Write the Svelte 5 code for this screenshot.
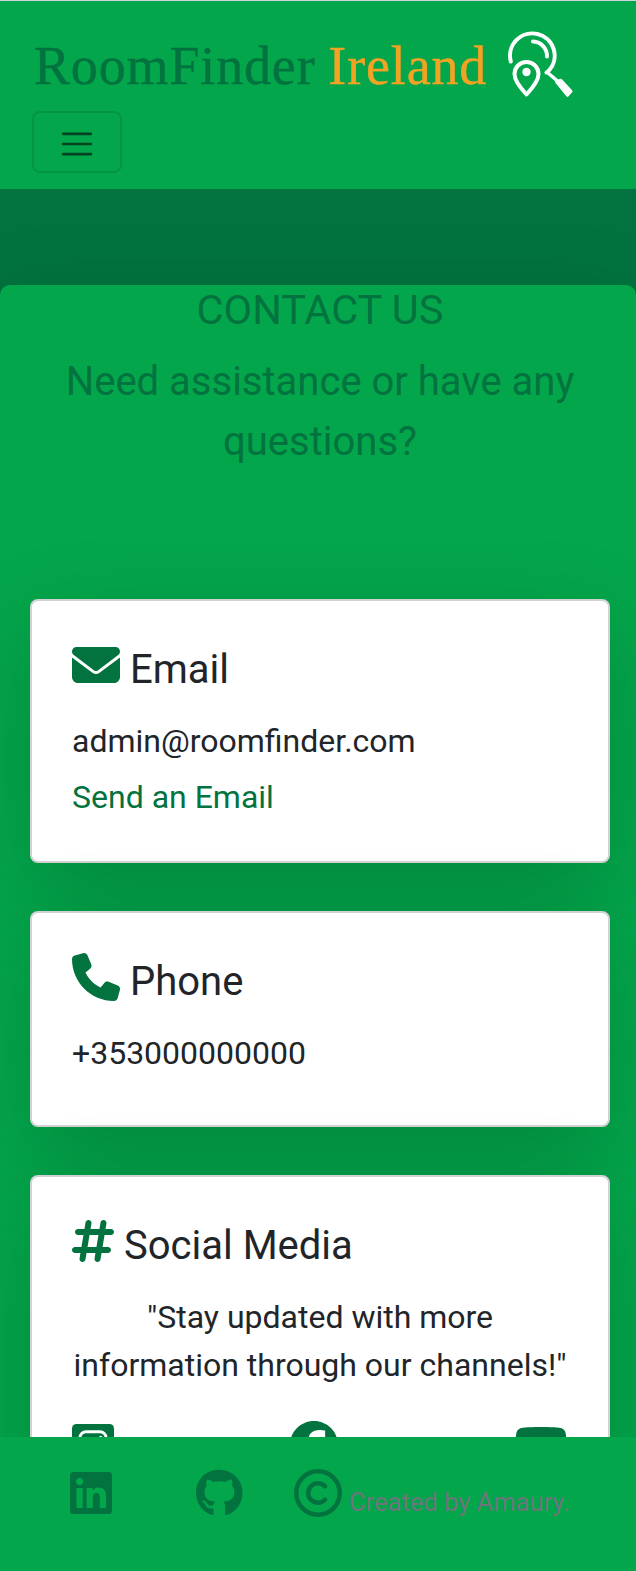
<script>
  const envelope = 'M48 64C21.500 64 0 85.500 0 112c0 15.100 7.100 29.300 19.200 38.400L236.800 313.600c11.400 8.500 27 8.500 38.400 0L492.800 150.400c12.100-9.100 19.200-23.300 19.200-38.400c0-26.500-21.500-48-48-48H48zM0 176V384c0 35.300 28.700 64 64 64H448c35.300 0 64-28.700 64-64V176L294.400 339.200c-22.800 17.100-54 17.100-76.800 0L0 176z';
  const phone = 'M164.900 24.600c-7.700-18.600-28-28.500-47.400-23.200l-88 24C12.100 30.200 0 46 0 64C0 311.400 200.600 512 448 512c18 0 33.800-12.100 38.600-29.500l24-88c5.300-19.400-4.600-39.700-23.200-47.400l-96-40c-16.300-6.800-35.200-2.100-46.300 11.600L304.700 368C234.300 334.700 177.300 277.700 144 207.300L193.300 167c13.700-11.200 18.400-30 11.600-46.300l-40-96z';
  const hashtag = 'M181.300 32.400c17.400 2.900 29.200 19.400 26.300 36.800L197.800 128h95.100l11.500-69.300c2.900-17.400 19.400-29.200 36.800-26.300s29.200 19.400 26.300 36.800L357.800 128H416c17.700 0 32 14.300 32 32s-14.300 32-32 32H347.100L325.800 320H384c17.700 0 32 14.300 32 32s-14.300 32-32 32H315.100l-11.500 69.300c-2.900 17.400-19.400 29.200-36.800 26.300s-29.200-19.400-26.300-36.800l9.800-58.700H155.100l-11.500 69.300c-2.900 17.400-19.400 29.200-36.800 26.300s-29.200-19.400-26.300-36.800L90.200 384H32c-17.700 0-32-14.300-32-32s14.300-32 32-32h68.900l21.300-128H64c-17.700 0-32-14.300-32-32s14.300-32 32-32h68.900l11.500-69.300c2.900-17.400 19.400-29.200 36.800-26.300zM187.100 192L165.800 320h95.100l21.300-128H187.100z';
  const facebook = 'M512 256C512 114.600 397.400 0 256 0S0 114.600 0 256C0 376 82.700 476.800 194.200 504.500V334.200H141.400V256h52.800V222.300c0-87.100 39.400-127.500 125-127.500c16.200 0 44.200 3.200 55.700 6.400V172c-6-.6-16.500-1-29.600-1c-42 0-58.200 15.900-58.200 57.200V256h83.600l-14.400 78.200H287V510.100C413.800 494.800 512 386.900 512 256z';
  const youtube = 'M549.655 124.083c-6.281-23.650-24.787-42.276-48.284-48.597C458.781 64 288 64 288 64S117.220 64 74.629 75.486c-23.497 6.322-42.003 24.947-48.284 48.597-11.412 42.867-11.412 132.305-11.412 132.305s0 89.438 11.412 132.305c6.281 23.650 24.787 41.500 48.284 47.821C117.220 448 288 448 288 448s170.780 0 213.371-11.486c23.497-6.321 42.003-24.171 48.284-47.821 11.412-42.867 11.412-132.305 11.412-132.305s0-89.438-11.412-132.305zm-317.510 213.508V175.185l142.739 81.205-142.739 81.201z';
  const linkedin = 'M416 32H31.900C14.300 32 0 46.500 0 64.300v383.400C0 465.500 14.300 480 31.900 480H416c17.600 0 32-14.500 32-32.300V64.300c0-17.800-14.400-32.300-32-32.300zM135.400 416H69V202.200h66.500V416zm-33.200-243c-21.300 0-38.500-17.300-38.500-38.500S80.900 96 102.200 96c21.200 0 38.500 17.300 38.500 38.500 0 21.300-17.200 38.500-38.500 38.500zm282.100 243h-66.400V312c0-24.800-.5-56.700-34.500-56.700-34.600 0-39.900 27-39.900 54.900V416h-66.400V202.200h63.700v29.200h.9c8.900-16.800 30.600-34.500 62.900-34.500 67.200 0 79.700 44.300 79.700 101.900V416z';
  const github = 'M165.900 397.400c0 2-2.300 3.600-5.200 3.600-3.300.3-5.600-1.300-5.600-3.600 0-2 2.300-3.600 5.200-3.600 3-.3 5.600 1.300 5.600 3.600zm-31.100-4.500c-.7 2 1.300 4.300 4.300 4.900 2.600 1 5.600 0 6.200-2s-1.300-4.300-4.300-5.200c-2.600-.7-5.500.3-6.200 2.300zm44.200-1.700c-2.900.7-4.900 2.600-4.600 4.900.3 2 2.900 3.300 5.900 2.600 2.900-.7 4.900-2.600 4.600-4.600-.3-1.900-3-3.200-5.900-2.900zM244.800 8C106.100 8 0 113.300 0 252c0 110.900 69.800 205.800 169.500 239.200 12.800 2.300 17.300-5.600 17.300-12.100 0-6.200-.3-40.400-.3-61.400 0 0-70 15-84.700-29.800 0 0-11.400-29.100-27.800-36.600 0 0-22.900-15.700 1.600-15.400 0 0 24.900 2 38.600 25.800 21.900 38.600 58.600 27.500 72.900 20.900 2.300-16 8.800-27.100 16-33.700-55.900-6.200-112.300-14.300-112.300-110.500 0-27.500 7.600-41.300 23.600-58.900-2.600-6.500-11.100-33.300 2.600-67.900 20.900-6.500 69 27 69 27 20-5.600 41.500-8.500 62.800-8.500s42.800 2.900 62.800 8.500c0 0 48.100-33.600 69-27 13.700 34.700 5.200 61.400 2.600 67.900 16 17.700 25.800 31.500 25.800 58.900 0 96.500-58.900 104.200-114.800 110.500 9.200 7.900 17 22.900 17 46.400 0 33.700-.3 75.400-.3 83.600 0 6.500 4.600 14.400 17.300 12.100C428.200 457.800 496 362.900 496 252 496 113.300 383.500 8 244.800 8z';
</script>

{#snippet icon(path, width)}
  <svg class="icon" viewBox="0 0 {width} 512" width={(width * 48) / 512} height="48" aria-hidden="true"><path d={path} /></svg>
{/snippet}

<div class="page">
  <header>
    <a class="brand" href="#home">
      <span class="name">RoomFinder <span class="accent">Ireland</span></span>
      <svg class="logo" viewBox="0 0 68 68" width="68" height="68" fill="none" stroke="#fff" stroke-width="4" stroke-linecap="round" stroke-linejoin="round" aria-hidden="true">
        <path d="M4.800 31.500A22.300 22.300 0 1 1 43 40.500L40.500 42.500" />
        <path d="M27 11.500A14.500 14.500 0 0 1 41 26.500" />
        <path d="M20.500 64.500C14 57.500 8.500 50.500 8.500 44a12 12 0 0 1 24 0C32.500 50.500 27 57.500 20.500 64.500Z" />
        <circle cx="20.500" cy="42" r="4.200" fill="#fff" stroke="none" />
        <path d="M41.500 42.500L52 51.500" stroke-width="3.500" />
        <path d="M50.500 51.700L54.800 50.300L65 61.300L61.500 65.300Z" fill="#fff" stroke-width="3" />
      </svg>
    </a>
    <button class="toggler" aria-label="Menu">
      <svg viewBox="0 0 30 30" width="38" height="38" fill="none" stroke="rgba(6,44,24,.8)" stroke-width="2" stroke-linecap="round"><path d="M4 7h22M4 15h22M4 23h22" /></svg>
    </button>
  </header>

  <main>
    <h1>CONTACT US</h1>
    <p class="lead">Need assistance or have any questions?</p>
    <div class="cards">
      <section class="card">
        <h2>{@render icon(envelope, 512)}<span>Email</span></h2>
        <p>admin@roomfinder.com</p>
        <a class="mail" href="#email">Send an Email</a>
      </section>
      <section class="card">
        <h2>{@render icon(phone, 512)}<span>Phone</span></h2>
        <p>+353000000000</p>
      </section>
      <section class="card">
        <h2>{@render icon(hashtag, 448)}<span>Social Media</span></h2>
        <p class="quote">"Stay updated with more information through our channels!"</p>
        <div class="social">
          <svg class="icon" viewBox="0 0 448 512" width="42" height="48" aria-hidden="true">
            <rect y="32" width="448" height="448" rx="48" />
            <rect x="84" y="114" width="280" height="280" rx="68" fill="none" stroke="#fff" stroke-width="32" />
            <circle cx="224" cy="256" r="62" fill="none" stroke="#fff" stroke-width="28" />
            <circle cx="306" cy="174" r="18" fill="#fff" />
          </svg>
          {@render icon(facebook, 512)}
          {@render icon(youtube, 576)}
        </div>
      </section>
    </div>
  </main>

  <footer>
    {@render icon(linkedin, 448)}
    <span class="git">{@render icon(github, 496)}</span>
    <svg viewBox="0 0 48 48" width="48" height="48" fill="none" stroke="#02733e" stroke-width="4.500" stroke-linecap="round" aria-hidden="true">
      <circle cx="24" cy="24" r="21.750" />
      <path d="M31 17.300A9.750 9.750 0 1 0 31 30.700" />
    </svg>
    <span class="credit">Created by Amaury.</span>
  </footer>
</div>

<style>
  :global(body) { margin: 0; overflow: hidden; }
  .page {
    box-sizing: border-box;
    width: 636px;
    height: 1571px;
    overflow: hidden;
    display: flex;
    flex-direction: column;
    border-top: 1px solid #ced4da;
    background: #02733e;
    color: #212529;
    font: 32px/48px Roboto, sans-serif;
  }
  h1, h2, p { margin: 0; font-weight: 400; }
  a { text-decoration: none; }
  svg { display: block; flex: none; }
  .icon { fill: #02733e; }
  header {
    box-sizing: border-box;
    flex: none;
    height: 188px;
    padding: 29px 32px 16px;
    background: #04a64b;
    position: relative;
    z-index: 2;
  }
  .brand { display: flex; height: 81px; color: #02733e; }
  .name {
    width: 474px;
    padding: 5px 0 0 2px;
    box-sizing: border-box;
    font: 54px/62px "Liberation Serif", serif;
    letter-spacing: .85px;
    word-spacing: -1.5px;
    -webkit-text-stroke: .4px;
    white-space: nowrap;
  }
  .accent { color: #f2a324; }
  .toggler {
    box-sizing: border-box;
    width: 90px;
    height: 62px;
    padding: 4px 0 0;
    display: flex;
    align-items: center;
    justify-content: center;
    background: none;
    border: 2px solid rgba(0, 0, 0, .1);
    border-radius: 8px;
  }
  main {
    flex: 1;
    min-height: 0;
    margin-top: 96px;
    padding: 0 26px 0 30px;
    border-radius: 10px 10px 0 0;
    background: #04a64b;
    box-shadow: 0 32px 96px rgba(0, 0, 0, .175);
  }
  h1 { font-size: 41.5px; line-height: 50px; margin-bottom: 17px; text-align: center; color: #02733e; }
  .lead { font-size: 40px; line-height: 60px; margin-bottom: 127px; text-align: center; color: #02733e; }
  .cards { display: flex; flex-direction: column; gap: 48px; }
  .card {
    padding: 40px;
    border: 2px solid rgba(0, 0, 0, .175);
    border-radius: 8px;
    background: #fff;
    box-shadow: 0 32px 96px rgba(0, 0, 0, .175);
  }
  h2 { display: flex; gap: 10px; height: 60px; margin-bottom: 16px; font-size: 40px; line-height: 48px; }
  h2 span { padding-top: 5px; }
  p { margin-bottom: 8px; }
  .mail { display: block; color: #02733e; }
  .quote { text-align: center; margin-bottom: 32px; }
  .social { display: flex; justify-content: space-between; height: 120px; }
  footer {
    box-sizing: border-box;
    flex: none;
    height: 134px;
    padding: 32px 0 0 70px;
    display: flex;
    background: #04a64b;
    position: relative;
    z-index: 2;
  }
  .git { margin: 0 51.500px 0 84px; }
  .credit { padding: 9px 0 0 7px; font-size: 25.5px; line-height: 48px; color: #6c757d; white-space: nowrap; }
</style>
